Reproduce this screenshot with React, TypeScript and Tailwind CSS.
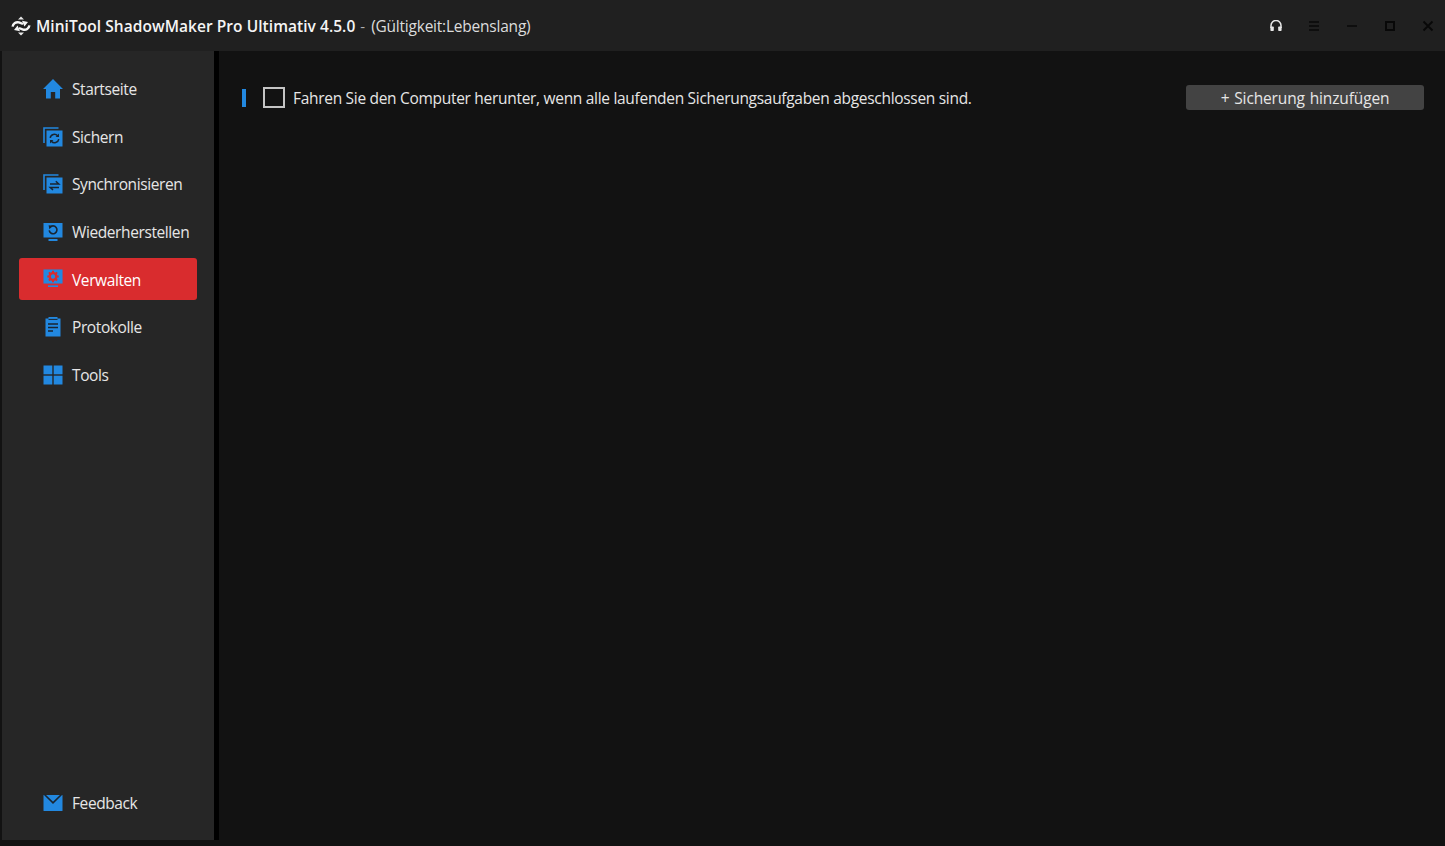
import React from 'react';

type IconProps = { className?: string };

const HomeIcon = ({ className }: IconProps) => (
  <svg viewBox="0 0 20 20" className={className} fill="#2288e0">
    <path d="M10 0 L20 10 L17 10 L17 19.5 L12.2 19.5 L12.2 13 L7.8 13 L7.8 19.5 L3 19.5 L3 10 L0 10 Z" />
  </svg>
);

const BackupIcon = ({ className }: IconProps) => (
  <svg viewBox="0 0 20 20" className={className} fill="none">
    <path d="M1 16 V1 H15.5" stroke="#2288e0" strokeWidth="1.6" />
    <rect x="3.5" y="3.5" width="16" height="16" fill="#2288e0" />
    <path d="M7.2 10.8 A4.2 4.2 0 0 1 14.6 8.8" stroke="#1a2530" strokeWidth="1.5" />
    <path d="M15.8 12.2 A4.2 4.2 0 0 1 8.4 14.2" stroke="#1a2530" strokeWidth="1.5" />
    <path d="M16 6.6 V10 H12.6 Z M7 16.4 V13 H10.4 Z" fill="#1a2530" />
  </svg>
);

const SyncIcon = ({ className }: IconProps) => (
  <svg viewBox="0 0 20 20" className={className} fill="none">
    <path d="M1 16 V1 H15.5" stroke="#2288e0" strokeWidth="1.6" />
    <rect x="3.5" y="3.5" width="16" height="16" fill="#2288e0" />
    <path d="M7 10 H15.8 L12.8 7.2 M16 13.4 H7.2 L10 16" stroke="#1a2530" strokeWidth="1.5" />
  </svg>
);

const RestoreIcon = ({ className }: IconProps) => (
  <svg viewBox="0 0 20 20" className={className} fill="none">
    <rect x="0.5" y="1" width="19" height="14.5" fill="#2288e0" />
    <rect x="5.5" y="17" width="9" height="2" fill="#2288e0" />
    <path d="M7 5.4 A3.9 3.9 0 1 1 6.2 8.4" stroke="#1a2530" strokeWidth="1.6" />
    <path d="M5.6 3.2 L9.6 3.8 L6.4 7.2 Z" fill="#1a2530" />
  </svg>
);

const ManageIcon = ({ className }: IconProps) => (
  <svg viewBox="0 0 22 22" className={className} fill="none">
    <rect x="0.5" y="0.5" width="21" height="15.5" fill="#2288e0" />
    <rect x="5.5" y="18" width="11" height="1.8" fill="#2288e0" />
    <circle cx="11" cy="8.2" r="3.7" stroke="#d92c2e" strokeWidth="2.6" />
    <path d="M11 1.9 V5 M11 11.4 V14.5 M4.7 8.2 H7.8 M14.2 8.2 H17.3 M6.5 3.7 L8.7 5.9 M13.3 10.5 L15.5 12.7 M6.5 12.7 L8.7 10.5 M13.3 5.9 L15.5 3.7" stroke="#d92c2e" strokeWidth="2.2" />
  </svg>
);

const LogIcon = ({ className }: IconProps) => (
  <svg viewBox="0 0 20 20" className={className} fill="none">
    <path d="M2.5 1.5 H5.5 V0 H14.5 V1.5 H17.5 V19.5 H2.5 Z" fill="#2288e0" />
    <path d="M5.5 2.4 H14.5" stroke="#1a2530" strokeWidth="1" />
    <path d="M5 7 H15 M5 10.5 H15 M5 14 H10" stroke="#1a2530" strokeWidth="1.4" />
  </svg>
);

const ToolsIcon = ({ className }: IconProps) => (
  <svg viewBox="0 0 20 20" className={className} fill="#2288e0">
    <rect x="0.5" y="0.5" width="8.8" height="8.8" />
    <rect x="10.7" y="0.5" width="8.8" height="8.8" />
    <rect x="0.5" y="10.7" width="8.8" height="8.8" />
    <rect x="10.7" y="10.7" width="8.8" height="8.8" />
  </svg>
);

const MailIcon = ({ className }: IconProps) => (
  <svg viewBox="0 0 20 20" className={className} fill="none">
    <rect x="0.5" y="2" width="19" height="16" rx="0.6" fill="#2288e0" />
    <path d="M1.5 1.5 L10 9.8 L18.5 1.5" stroke="#1a2530" strokeWidth="1.6" />
  </svg>
);

// two curved arrows chasing each other, with a small cap above and below
const Logo = () => (
  <svg viewBox="0 0 20 20" className="h-[20px] w-[20px]" fill="none">
    <path d="M7 3.4 L10 0.4 L13 3.4 Z M7 16.6 L10 19.6 L13 16.6 Z" fill="#e8e8e8" />
    <path d="M1.6 10.6 C2 7.4 5 5.6 8 6.4 L12 8" stroke="#f5f5f5" strokeWidth="2.4" />
    <path d="M18.4 9.4 C18 12.6 15 14.4 12 13.6 L8 12" stroke="#f5f5f5" strokeWidth="2.4" />
    <path d="M11 4.8 L17 6 L13.4 10.4 Z M9 15.2 L3 14 L6.6 9.6 Z" fill="#f5f5f5" />
  </svg>
);

const HeadsetIcon = () => (
  <svg viewBox="0 0 12 12" className="h-[12px] w-[12px]" fill="none">
    <path d="M1 8 V5.5 A5 5 0 0 1 11 5.5 V8" stroke="#e6e6e6" strokeWidth="1.5" />
    <rect x="0.4" y="6.4" width="3.4" height="4.6" rx="0.8" fill="#e6e6e6" />
    <rect x="8.2" y="6.4" width="3.4" height="4.6" rx="0.8" fill="#e6e6e6" />
  </svg>
);

const MenuIcon = () => (
  <svg viewBox="0 0 12 12" className="h-[12px] w-[12px]" fill="none" stroke="#080808" strokeWidth="1.6">
    <path d="M1 2 H11 M1 6 H11 M1 10 H11" />
  </svg>
);

const MinIcon = () => (
  <svg viewBox="0 0 12 12" className="h-[12px] w-[12px]" fill="none" stroke="#080808" strokeWidth="1.5">
    <path d="M1 6 H11" />
  </svg>
);

const MaxIcon = () => (
  <svg viewBox="0 0 12 12" className="h-[12px] w-[12px]" fill="none" stroke="#080808" strokeWidth="2">
    <rect x="2" y="2" width="8" height="8" />
  </svg>
);

const CloseIcon = () => (
  <svg viewBox="0 0 12 12" className="h-[12px] w-[12px]" fill="none" stroke="#080808" strokeWidth="1.8">
    <path d="M1.5 1.5 L10.5 10.5 M10.5 1.5 L1.5 10.5" />
  </svg>
);

const navItems = [
  { label: 'Startseite', icon: <HomeIcon className="h-[20px] w-[20px]" /> },
  { label: 'Sichern', icon: <BackupIcon className="h-[20px] w-[20px]" /> },
  { label: 'Synchronisieren', icon: <SyncIcon className="h-[20px] w-[20px]" /> },
  { label: 'Wiederherstellen', icon: <RestoreIcon className="h-[20px] w-[20px]" /> },
  { label: 'Verwalten', icon: <ManageIcon className="h-[22px] w-[22px]" />, active: true },
  { label: 'Protokolle', icon: <LogIcon className="h-[20px] w-[20px]" /> },
  { label: 'Tools', icon: <ToolsIcon className="h-[20px] w-[20px]" /> },
];

const NavItem = ({ label, icon, active }: { label: string; icon: React.ReactNode; active?: boolean }) => (
  <div className={`flex h-[42px] items-center rounded-[3px] pl-[24px] ${active ? 'bg-[#d92c2e] text-white' : 'text-[#e6e6e6]'}`}>
    <span className="flex w-[20px] shrink-0 items-center justify-center">{icon}</span>
    <span className="ml-[9px] pt-[2px] text-[15.5px] leading-none tracking-[-0.4px]">{label}</span>
  </div>
);

const App = () => {
  return (
    <div className="flex h-[846px] w-[1445px] flex-col overflow-hidden bg-[#121212] font-['Open_Sans',sans-serif] text-[#e6e6e6]">
      <header className="flex h-[51px] shrink-0 items-center bg-[#202020] pl-[11px]">
        <Logo />
        <span className="ml-[5px] pt-[2px] text-[15.5px] font-semibold tracking-[0.05px] text-[#f5f5f5]">MiniTool ShadowMaker Pro Ultimativ 4.5.0</span>
        <span className="ml-[5px] pt-[2px] text-[15px] text-[#b0b0b0]">-</span>
        <span className="ml-[6px] pt-[2px] text-[15.5px] tracking-[-0.22px] text-[#dcdcdc]">(Gültigkeit:Lebenslang)</span>
        <div className="ml-auto flex items-center gap-[26px] pr-[11px]">
          <HeadsetIcon />
          <MenuIcon />
          <MinIcon />
          <MaxIcon />
          <CloseIcon />
        </div>
      </header>

      <div className="flex min-h-0 flex-1">
        <div className="mb-[6px] ml-[2px] flex shrink-0">
          <aside className="flex w-[212px] flex-col justify-between bg-[#262626] px-[17px] pb-[16px] pt-[17px]">
            <nav className="flex flex-col gap-[5.6px]">
              {navItems.map((item) => (
                <NavItem key={item.label} {...item} />
              ))}
            </nav>
            <NavItem label="Feedback" icon={<MailIcon className="h-[20px] w-[20px]" />} />
          </aside>
          <div className="w-[5px] bg-black" />
        </div>

        <main className="flex-1 pl-[23px] pr-[21px] pt-[34px]">
          <div className="flex h-[25px] items-center">
            <span className="h-[18px] w-[4px] bg-[#2288e0]" />
            <span className="ml-[17px] h-[21px] w-[22px] border-2 border-[#c4c4c4]" />
            <span className="ml-[8px] pt-[2px] text-[15.5px] tracking-[-0.3px]">
              Fahren Sie den Computer herunter, wenn alle laufenden Sicherungsaufgaben abgeschlossen sind.
            </span>
            <button className="ml-auto h-[25px] w-[238px] rounded-[3px] bg-[#434343] pt-[2px] text-[15.5px] tracking-[-0.14px] text-[#e6e6e6] [word-spacing:1px]">
              + Sicherung hinzufügen
            </button>
          </div>
        </main>
      </div>
    </div>
  );
};

export default App;
